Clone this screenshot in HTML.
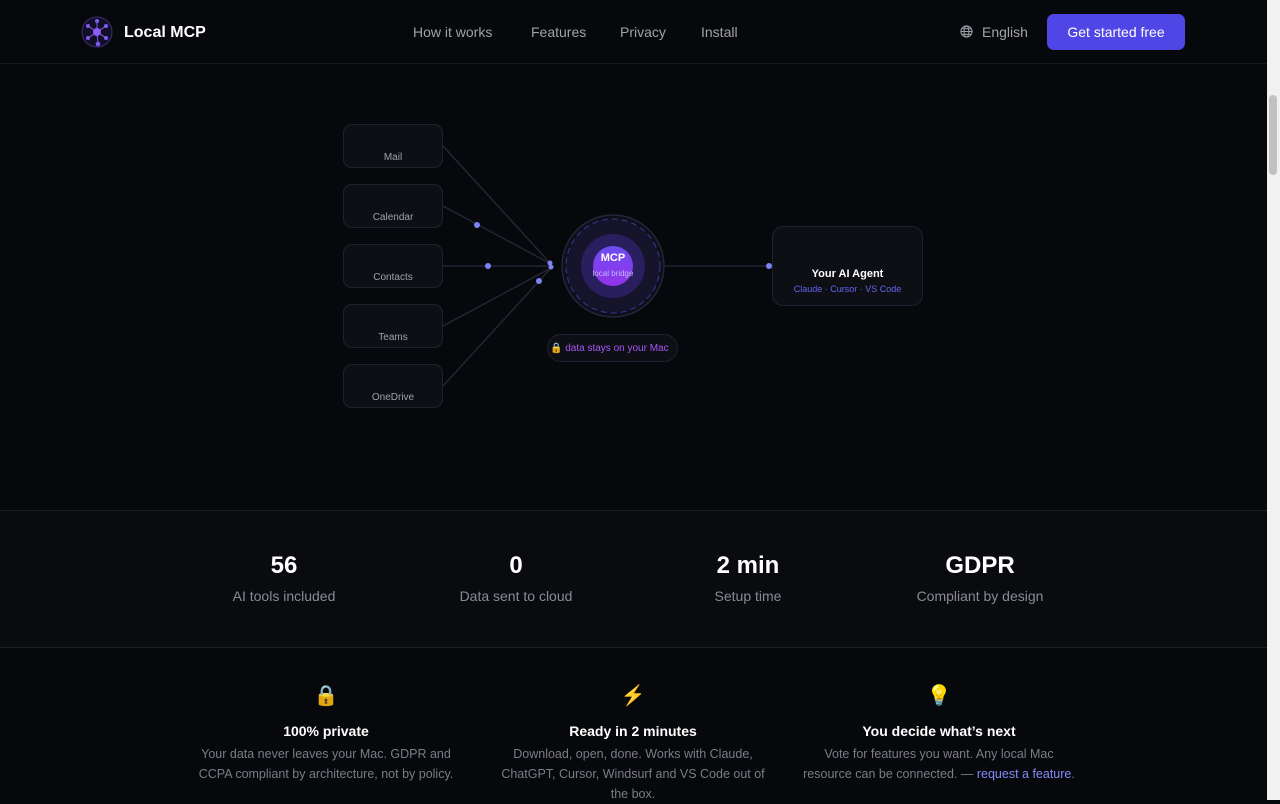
<!DOCTYPE html>
<html><head><meta charset="utf-8"><style>
*{box-sizing:border-box;margin:0;padding:0}
body{width:1280px;height:800px;overflow:hidden;background:#07080b;font-family:"Liberation Sans",sans-serif;color:#fff;position:relative}
.a{position:absolute}
.nav a{color:#a1a1aa;font-size:14px;text-decoration:none;position:absolute;top:24px}
.box{position:absolute;left:343px;width:100px;height:44px;border:1px solid #1f2230;border-radius:9px;background:#0e0f15;color:#a1a1aa;font-size:10px;text-align:center;padding-top:27px}
.stat{position:absolute;top:552px;width:220px;text-align:center}
.stat b{display:block;font-size:24px;color:#fff}
.stat span{display:block;font-size:14px;color:#8a8a94;margin-top:8px}
.feat{position:absolute;top:683px;width:300px;text-align:center}
.feat .i{font-size:20px;height:24px}
.feat h3{font-size:14px;margin-top:16px;color:#fff}
.feat p{font-size:12.5px;color:#7c7c86;line-height:20px;margin:5px auto 0;width:280px}
</style></head><body>
<div class="a" style="left:0;top:0;width:1267px;height:64px;border-bottom:1px solid #161821"></div>
<svg class="a" style="left:81px;top:16px" width="32" height="32" viewBox="0 0 32 32">
<circle cx="16" cy="16" r="15" fill="#120f24" stroke="#3b2f7a" stroke-width="1"/>
<g stroke="#6d4fd8" stroke-width="1.2"><line x1="16" y1="16" x2="16" y2="5"/><line x1="16" y1="16" x2="7" y2="10"/><line x1="16" y1="16" x2="25" y2="10"/><line x1="16" y1="16" x2="7" y2="22"/><line x1="16" y1="16" x2="25" y2="22"/><line x1="16" y1="16" x2="17" y2="28"/></g>
<g fill="#7c5cf0"><circle cx="16" cy="5" r="2"/><circle cx="7" cy="10" r="2"/><circle cx="25" cy="10" r="2"/><circle cx="7" cy="22" r="2"/><circle cx="25" cy="22" r="2"/><circle cx="17" cy="28" r="2.3"/></g>
<circle cx="16" cy="16" r="4" fill="#8b5cf6"/></svg>
<div class="a" style="left:124px;top:24px;font-size:16px;font-weight:bold">Local MCP</div>
<div class="nav"><a style="left:413px">How it works</a><a style="left:531px">Features</a><a style="left:620px">Privacy</a><a style="left:701px">Install</a></div>
<svg class="a" style="left:960px;top:25px" width="13" height="13" viewBox="0 0 14 14" fill="none" stroke="#a1a1aa" stroke-width="1.1"><circle cx="7" cy="7" r="6"/><ellipse cx="7" cy="7" rx="2.6" ry="6"/><line x1="1" y1="7" x2="13" y2="7"/><line x1="2" y1="4" x2="12" y2="4"/><line x1="2" y1="10" x2="12" y2="10"/></svg>
<div class="a" style="left:982px;top:24px;font-size:14px;color:#a1a1aa">English</div>
<div class="a" style="left:1047px;top:14px;width:138px;height:36px;border-radius:7px;background:#4f46e5;font-size:14px;text-align:center;line-height:36px;font-weight:500">Get started free</div>
<div class="a" style="left:1267px;top:0;width:13px;height:800px;background:#f1f1f1"></div>
<div class="a" style="left:1269px;top:95px;width:8px;height:80px;background:#c1c1c1;border-radius:4px"></div>

<svg class="a" style="left:0;top:0" width="1267" height="510">
<g stroke="#262838" stroke-width="1.3" fill="none">
<line x1="443" y1="146" x2="551" y2="264"/><line x1="443" y1="206" x2="551" y2="264"/><line x1="443" y1="266" x2="551" y2="266"/><line x1="443" y1="326" x2="551" y2="268"/><line x1="443" y1="386" x2="551" y2="268"/><line x1="665" y1="266" x2="772" y2="266"/></g>
<g fill="#7c83f5"><circle cx="477" cy="225" r="3"/><circle cx="488" cy="266" r="3"/><circle cx="539" cy="281" r="3"/><circle cx="550" cy="263" r="2.5"/><circle cx="551" cy="267" r="2.5"/><circle cx="769" cy="266" r="3"/></g>
<circle cx="613" cy="266" r="51" fill="#0f0f1c" stroke="#242538" stroke-width="1.5"/>
<circle cx="613" cy="266" r="47" fill="#15142b" stroke="#3a3590" stroke-width="1" stroke-dasharray="6 4"/>
<circle cx="613" cy="266" r="32" fill="#2a1f5e"/>
<defs><linearGradient id="g" x1="0" y1="0" x2="0" y2="1"><stop offset="0" stop-color="#6d4cf0"/><stop offset="1" stop-color="#9333ea"/></linearGradient></defs>
<circle cx="613" cy="266" r="20" fill="url(#g)"/>
<text x="613" y="261" text-anchor="middle" font-size="11" font-weight="bold" fill="#fff" font-family="Liberation Sans">MCP</text>
<text x="613" y="276" text-anchor="middle" font-size="8" fill="#c4b5fd" font-family="Liberation Sans">local bridge</text>
</svg>
<div class="box" style="top:124px">Mail</div>
<div class="box" style="top:184px">Calendar</div>
<div class="box" style="top:244px">Contacts</div>
<div class="box" style="top:304px">Teams</div>
<div class="box" style="top:364px">OneDrive</div>
<div class="a" style="left:772px;top:226px;width:151px;height:80px;border:1px solid #1f2230;border-radius:11px;background:#0e0f15;text-align:center">
<div style="font-size:11px;font-weight:bold;margin-top:41px">Your AI Agent</div>
<div style="font-size:9px;color:#6366f1;margin-top:4px">Claude · Cursor · VS Code</div></div>
<div class="a" style="left:547px;top:334px;width:131px;height:28px;border:1px solid #1f2230;border-radius:14px;background:#0e0f15;font-size:10px;color:#a855f7;line-height:28px;padding-left:2px;white-space:nowrap">🔒 data stays on your Mac</div>

<div class="a" style="left:0;top:510px;width:1267px;height:138px;background:#0a0b0f;border-top:1px solid #1c1e2a;border-bottom:1px solid #1c1e2a"></div>
<div class="stat" style="left:174px"><b>56</b><span>AI tools included</span></div>
<div class="stat" style="left:406px"><b>0</b><span>Data sent to cloud</span></div>
<div class="stat" style="left:638px"><b>2 min</b><span>Setup time</span></div>
<div class="stat" style="left:870px"><b>GDPR</b><span>Compliant by design</span></div>

<div class="feat" style="left:176px"><div class="i">🔒</div><h3>100% private</h3><p>Your data never leaves your Mac. GDPR and CCPA compliant by architecture, not by policy.</p></div>
<div class="feat" style="left:483px"><div class="i">⚡</div><h3>Ready in 2 minutes</h3><p>Download, open, done. Works with Claude, ChatGPT, Cursor, Windsurf and VS Code out of the box.</p></div>
<div class="feat" style="left:789px"><div class="i">💡</div><h3>You decide what’s next</h3><p>Vote for features you want. Any local Mac resource can be connected. — <span style="color:#818cf8">request a feature</span>.</p></div>
</body></html>
